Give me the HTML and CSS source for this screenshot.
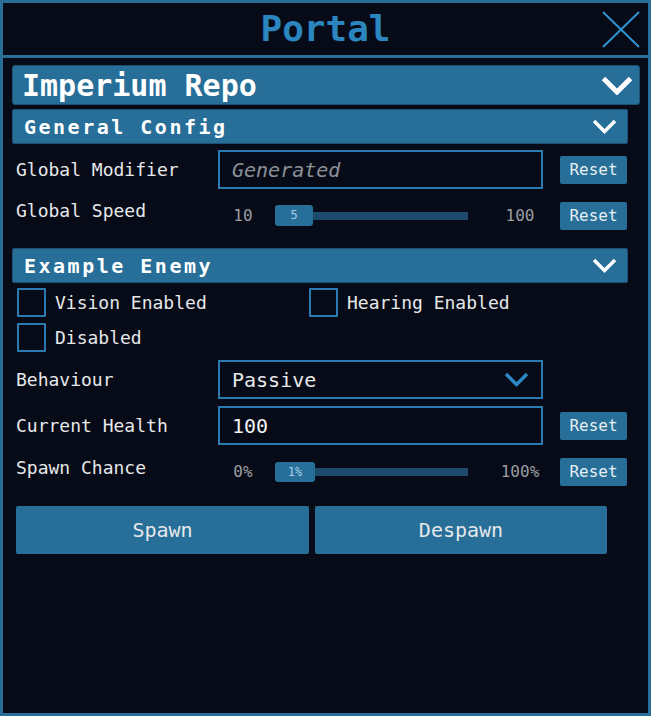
FILE: index.html
```html
<!DOCTYPE html>
<html lang="en">
<head>
<meta charset="utf-8">
<title>Portal</title>
<link rel="stylesheet" href="styles.css">
</head>
<body>
<div class="window">
  <div class="titlebar">
    <div class="title">Portal</div>
    <svg class="close" width="38" height="37" viewBox="0 0 38 37"><path d="M1 1 L37 36 M37 1 L1 36" stroke="#2e93d4" stroke-width="2" fill="none"/></svg>
  </div>
  <div class="content">
    <div class="repo-header">
      <span>Imperium Repo</span>
      <svg width="32" height="19" viewBox="0 0 32 19"><path d="M2.5 2.5 L16 16 L29.5 2.5" stroke="#fff" stroke-width="5" fill="none"/></svg>
    </div>

    <div class="section">
      <div class="section-header">
        <span>General Config</span>
        <svg width="25" height="15" viewBox="0 0 25 15"><path d="M2 2 L12.5 12.5 L23 2" stroke="#fff" stroke-width="3.5" fill="none"/></svg>
      </div>
      <div class="row row-field gap6">
        <div class="label">Global Modifier</div>
        <div class="input placeholder">Generated</div>
        <div class="reset">Reset</div>
      </div>
      <div class="row row-slider gap12">
        <div class="label label-top">Global Speed</div>
        <div class="slider">
          <span class="min">10</span>
          <div class="track"><div class="handle">5</div></div>
          <span class="max">100</span>
        </div>
        <div class="reset">Reset</div>
      </div>
    </div>

    <div class="section section-enemy">
      <div class="section-header">
        <span>Example Enemy</span>
        <svg width="25" height="15" viewBox="0 0 25 15"><path d="M2 2 L12.5 12.5 L23 2" stroke="#fff" stroke-width="3.5" fill="none"/></svg>
      </div>
      <div class="checks">
        <div class="check"><span class="box"></span><span>Vision Enabled</span></div>
        <div class="check"><span class="box"></span><span>Hearing Enabled</span></div>
        <div class="check"><span class="box"></span><span>Disabled</span></div>
      </div>
      <div class="row row-field gap8">
        <div class="label">Behaviour</div>
        <div class="input select"><span>Passive</span>
          <svg width="25" height="15" viewBox="0 0 25 15"><path d="M2 2 L12.5 12.5 L23 2" stroke="#2b87c3" stroke-width="3.5" fill="none"/></svg>
        </div>
        <div></div>
      </div>
      <div class="row row-field gap7">
        <div class="label">Current Health</div>
        <div class="input value">100</div>
        <div class="reset">Reset</div>
      </div>
      <div class="row row-slider gap12">
        <div class="label label-top2">Spawn Chance</div>
        <div class="slider">
          <span class="min">0%</span>
          <div class="track"><div class="handle wide">1%</div></div>
          <span class="max">100%</span>
        </div>
        <div class="reset">Reset</div>
      </div>
      <div class="actions">
        <div class="btn">Spawn</div>
        <div class="btn">Despawn</div>
      </div>
    </div>
  </div>
</div>
</body>
</html>
```

FILE: styles.css
```css
html, body {
  margin: 0;
  padding: 0;
  background: #070b17;
}
body {
  font-family: "DejaVu Sans Mono", "Liberation Mono", monospace;
  color: #e6e8ea;
}
.window {
  width: 651px;
  height: 716px;
  box-sizing: border-box;
  border: 3px solid #276e99;
  background: #070b17;
  display: flex;
  flex-direction: column;
}
.titlebar {
  height: 52px;
  flex: none;
  border-bottom: 3px solid #276e99;
  display: grid;
  grid-template-columns: 1fr auto 1fr;
  align-items: center;
}
.title {
  grid-column: 2;
  color: #2b86c0;
  font-size: 36px;
  font-weight: bold;
  line-height: 1;
}
.close {
  grid-column: 3;
  justify-self: end;
  margin-right: 8px;
  display: block;
}
.content {
  padding: 7px 8px 0 9px;
}
.repo-header {
  height: 40px;
  box-sizing: border-box;
  background: #276e99;
  border: 1px solid #1c5174;
  border-radius: 3px;
  display: flex;
  align-items: center;
  justify-content: space-between;
  padding: 0 6px 0 9px;
  color: #fff;
  font-size: 30px;
  font-weight: bold;
}
.repo-header svg, .section-header svg, .select svg { display: block; }
.section {
  margin-right: 12px;
  margin-top: 4px;
}
.section-enemy {
  margin-top: 18px;
}
.section-header {
  height: 35px;
  box-sizing: border-box;
  background: #276e99;
  border: 1px solid #1c5174;
  border-radius: 2px;
  display: flex;
  align-items: center;
  justify-content: space-between;
  padding: 0 10px 0 11px;
  color: #fff;
  font-size: 20px;
  font-weight: bold;
  letter-spacing: 2.5px;
}
.row {
  display: grid;
  grid-template-columns: 185px 325px 67px;
  column-gap: 17px;
  padding-left: 4px;
  align-items: center;
}
.gap6 { margin-top: 6px; }
.gap7 { margin-top: 7px; }
.gap8 { margin-top: 8px; }
.gap12 { margin-top: 12px; }
.row-field { height: 39px; }
.row-slider { height: 29px; }
.label {
  font-size: 18px;
  line-height: 18px;
  color: #e6e8ea;
  white-space: nowrap;
}
.label-top { align-self: start; margin-top: 1px; }
.label-top2 { align-self: start; margin-top: 2px; }
.input {
  height: 39px;
  box-sizing: border-box;
  border: 2px solid #2a7bb0;
  padding: 0 12px;
  display: flex;
  align-items: center;
  font-size: 20px;
}
.placeholder {
  font-style: italic;
  color: #8b9097;
}
.value { color: #f2f2f2; }
.select {
  justify-content: space-between;
  color: #e6e8ea;
}
.reset {
  height: 28px;
  background: #276e99;
  border-radius: 2px;
  display: flex;
  align-items: center;
  justify-content: center;
  font-size: 16px;
  color: #e8eef2;
}
.slider {
  display: flex;
  align-items: center;
  height: 29px;
}
.min, .max {
  font-size: 16px;
  color: #9a9da2;
  text-align: center;
}
.min { width: 50px; margin-right: 7px; }
.max { width: 46px; margin-left: 29px; }
.track {
  position: relative;
  width: 193px;
  height: 8px;
  background: #1c4a6b;
}
.handle {
  position: absolute;
  left: 0;
  top: -7px;
  width: 38px;
  height: 21px;
  background: #276e99;
  border-radius: 3px;
  font-size: 12px;
  line-height: 21px;
  text-align: center;
  color: #a9cfe8;
}
.handle.wide { width: 40px; top: -6px; height: 20px; line-height: 20px; }
.checks {
  display: grid;
  grid-template-columns: 292px 292px;
  grid-auto-rows: 29px;
  row-gap: 6px;
  margin-top: 5px;
  padding-left: 5px;
}
.check {
  display: flex;
  align-items: center;
  font-size: 18px;
  color: #e6e8ea;
}
.box {
  width: 29px;
  height: 29px;
  box-sizing: border-box;
  border: 2px solid #2a7bb0;
  border-radius: 1px;
  margin-right: 9px;
  flex: none;
}
.actions {
  display: grid;
  grid-template-columns: 293px 292px;
  column-gap: 6px;
  margin-top: 20px;
  padding-left: 4px;
}
.btn {
  height: 48px;
  background: #276e99;
  border-radius: 2px;
  display: flex;
  align-items: center;
  justify-content: center;
  font-size: 20px;
  color: #e6e8ea;
}
```
